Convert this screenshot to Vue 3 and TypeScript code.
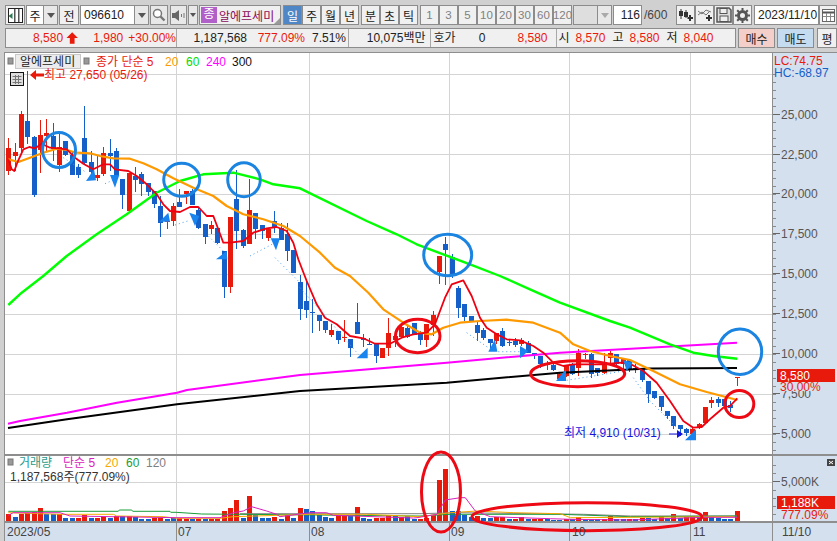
<script setup lang="ts">
type C = [string, number, number, number, number]
type Pt = [number, number]

const z3: C[] = [
  ['r',140,210,110,222],['r',153,165,125,210],['r',40,140,30,160],['b',60,108,-90,130],['b',108,282,105,288],
  ['r',102,147,57,215],['r',97,105,55,150],['b',105,145,65,180],['r',138,192,90,212],['b',120,162,120,165],
  ['b',163,222,150,222],['b',198,222,190,230],['b',111,185,15,190],['b',183,212,150,225],['r',222,232,165,240],
  ['r',156,218,138,225],['b',156,165,115,210],['b',150,225,142,240],['b',234,282,234,325],['r',215,330,215,330],
  ['b',225,236,198,272],['b',220,248,212,285],['b',246,272,246,285],['b',270,308,270,320],['b',315,365,285,407],
  ['r',360,362,340,385],['r',315,360,305,375],['b',303,318,265,318],['r',270,280,270,310],['b',270,312,265,312],
  ['b',327,382,320,385],['b',370,407,370,430],['r',372,385,360,400],['b',380,427,375,430],['b',450,558,450,590],
  ['r',348,558,348,575],['b',295,390,208,445],['b',387,435,385,440],['r',327,430,235,430],['b',336,385,336,415],
  ['b',372,390,372,415],['r',385,412,380,420],['b',360,377,330,395],['b',380,417,365,417],['b',400,450,365,480],
  ['b',447,515,447,515],
]
const z4: C[] = [
  ['b',183,263,163,297],['b',240,266,175,292],['b',273,276,235,335],['b',282,300,282,330],['b',300,327,300,335],
  ['r',327,343,310,348],['b',330,357,330,368],['r',349,352,297,362],['b',354,381,354,407],['b',303,338,245,338],
  ['b',352,358,340,378],['b',369,371,350,372],['b',370,405,365,425],['r',381,411,381,411],['r',336,381,291,405],
  ['r',345,358,345,378],['r',318,348,305,350],['b',321,348,315,350],['b',307,341,307,342],['b',340,357,330,372],
  ['r',309,357,309,378],['r',282,312,270,345],['r',105,153,105,188],['b',69,87,48,192],['b',108,159,100,172],
  ['b',201,260,195,292],['b',249,288,249,300],['b',285,303,285,303],['b',312,336,300,360],['b',327,351,320,358],
  ['b',354,366,354,390],['r',336,360,336,370],['b',330,375,320,378],['b',363,366,355,375],['b',360,372,351,377],
  ['r',358,370,352,374],['b',366,396,360,396],['b',396,402,396,415],['b',405,430,405,440],['r',425,432,420,448],
  ['b',432,447,425,450],
]
const z5: C[] = [
  ['r',160,175,155,180],['r',133,165,133,168],['b',133,160,125,162],['r',96,140,85,165],['r',100,103,95,115],
  ['b',100,160,95,172],['b',140,156,140,165],['r',130,155,95,160],['r',95,112,90,135],['b',100,130,100,135],
  ['r',115,130,110,145],['b',118,145,115,152],['b',142,146,130,155],['b',145,178,145,182],['b',180,218,180,245],
  ['b',210,230,210,235],['b',225,258,225,270],['b',270,285,270,295],['b',285,315,285,325],['b',312,325,312,345],
  ['b',325,335,320,345],['r',325,340,322,345],['r',310,322,305,325],['r',258,305,258,308],['r',238,247,228,262],
  ['b',233,245,228,258],['b',235,255,235,262],['b',252,262,240,272],['r',167,170,167,195],
]

const xOf = (i: number) => 8.3 + 6.333 * i
const conv = (a: C[], base: number) =>
  a.map((c) => ({ up: c[0] === 'r', t: base + c[1] / 3, b: base + c[2] / 3, wt: base + c[3] / 3, wb: base + c[4] / 3 }))
const candles = [...conv(z3, 100), ...conv(z4, 220), ...conv(z5, 320)].map((c, i) => ({
  ...c,
  x: Math.round(xOf(i)),
  h: Math.max(1, c.b - c.t),
}))

const fz3 = (p: Pt[]) => p.map(([x, y]): Pt => [x / 3, 100 + y / 3])
const fz4 = (p: Pt[]) => p.map(([x, y]): Pt => [280 + x / 3, 220 + y / 3])
const fz5 = (p: Pt[]) => p.map(([x, y]): Pt => [530 + x / 3, 320 + y / 3])
const fz6 = (p: Pt[]) => p.map(([x, y]): Pt => [x / 3, 445 + y / 3])
const fz7 = (p: Pt[]) => p.map(([x, y]): Pt => [417 + x / 3, 445 + y / 3])
const s = (p: Pt[]) => p.map(([x, y]) => `${x.toFixed(1)},${y.toFixed(1)}`).join(' ')

const red = s([
  ...fz3([[25,175],[35,205],[43,210],[52,185],[70,145],[88,138],[105,142],[125,128],[150,140],[175,142],[200,145],[225,170],[250,188],[280,205],[310,190],[330,190],[345,205],[385,210],[410,225],[440,250],[470,280],[490,310],[510,330],[540,333],[570,318],[595,318],[620,345],[640,345],[655,385],[670,425],[690,425],[730,420],[760,395],[800,382],[830,378],[860,390],[880,425]]),
  ...fz4([[55,115],[80,180],[110,250],[135,290],[170,310],[210,345],[250,352],[285,368],[330,368],[365,350],[400,340],[440,335],[465,310],[495,230],[515,190],[550,178],[575,225],[600,290],[620,320],[650,340],[680,355],[720,358],[760,375],[790,395],[820,425]]),
  ...fz5([[100,135],[130,130],[180,130],[220,130],[270,125],[300,128],[340,150],[380,185],[420,240],[460,300],[490,320],[515,318],[545,290],[580,260],[600,255],[622,232]]),
])
const orange = s([
  ...fz3([[25,175],[55,183],[90,170],[130,155],[170,143],[200,147],[230,155],[270,157],[300,165],[340,172],[390,173],[430,187],[470,205],[520,232],[580,260],[640,285],[680,315],[730,340],[790,355],[850,375]]),
  ...fz4([[60,45],[120,95],[165,140],[210,165],[265,215],[310,265],[370,305],[420,335],[455,340],[490,320],[540,305],[600,300],[680,296],[760,305],[840,335]]),
  ...fz5([[130,70],[180,90],[240,105],[300,117],[370,150],[450,190],[530,213],[622,237]]),
])
const green = s([
  ...fz3([[25,612],[65,575],[130,525],[200,465],[290,400],[380,340],[470,275],[540,240],[610,220],[700,215],[780,235],[820,250],[900,262]]),
  ...fz4([[260,0],[350,40],[410,70],[490,100],[570,130],[660,165],[750,205],[840,245]]),
  ...fz5([[240,0],[300,20],[420,70],[490,95],[550,105],[622,113]]),
])
const magenta = s([[8,422.7],[20,420],[67,411.7],[117,401.7],[177,391.7],[187,389],[300,374],[446.7,361.7],[560,351.7],[737,341.7]])
const black = s([[8,427],[67,418.3],[177,403.3],[300,390],[446.7,381.7],[560,371.7],[650,367.5],[737,367]])

const vols: [string, number][] = [
  ['r',205],['b',213],['r',205],['r',200],['r',197],['r',186],['b',205],['b',203],['r',203],['b',216],['b',216],['r',216],['r',207],['b',215],['r',215],['r',213],['b',215],['r',210],['b',210],['r',210],['b',214],['b',220],['b',218],['r',216],['r',216],['b',218],['b',216],['r',217],['r',218],['b',220],['r',218],['b',220],['r',218],['r',218],['r',195],['r',186],['r',162],['b',216],['r',150],['b',208],['b',216],['b',216],['r',213],['b',219],['r',208],['b',216],['r',186],['b',189],['b',195],['b',208],['b',213],['b',215],['r',208],['r',210],['b',210],['r',183],['b',216],['b',219],['r',215],['r',216],['r',208],['b',210],['r',213],['b',210],['b',218],
  ['r',220],['r',215],['r',208],['r',102],['r',69],['b',195],['b',195],['b',206],['b',213],['r',210],['b',216],['b',216],['r',214],['r',214],['b',218],['r',218],['r',213],['b',218],['r',218],['r',218],['b',218],['b',222],['b',222],['r',220],['b',220],['r',213],['b',220],['b',218],['b',220],['r',218],['r',210],['b',218],['b',218],['r',218],['b',218],['r',216],['b',215],['b',218],['r',212],['b',215],['r',204],['b',217],['r',213],['r',210],['b',216],['r',198],['b',214],['b',216],['b',219],['b',219],['r',195],
]
const volBars = vols.map((v, i) => {
  const y = 445 + v[1] / 3
  return { up: v[0] === 'r', x: Math.round(xOf(i)), y, h: 520 - y }
})
const volGrey = s([...fz6([[720,203],[1260,203]]), ...fz7([[120,200],[500,205],[640,210],[960,210]])])
const volGreen = s([...fz6([[25,196],[355,196],[358,192],[395,192],[398,196],[510,196],[512,199],[528,199],[605,204],[720,205],[1260,210]]), ...fz7([[100,205],[430,205],[640,212],[960,210]])])
const volOrange = s([...fz6([[25,200],[180,205],[340,205],[350,210],[490,212],[530,217],[660,217],[700,212],[930,205],[1100,205],[1260,212]]), ...fz7([[100,200],[180,195],[290,200],[430,203],[460,215],[950,212]])])
const volPink = s([...fz6([[25,208],[40,200],[180,200],[210,210],[530,215],[660,215],[700,200],[730,195],[755,182],[800,195],[830,205],[840,212],[930,200],[980,200],[1000,208],[1240,216]]), ...fz7([[0,215],[60,205],[85,162],[130,155],[145,155],[175,195],[220,212],[400,218],[460,220],[640,222],[860,214],[960,214]])])

const wings = [
  ...[[258,240,288,238,282,205],[330,222,358,222,345,260],[478,362,510,362,505,335],[568,335,598,345,585,375],[648,475,682,475,680,450],[812,412,840,412,828,448]].map((w) =>
    s(fz3([[w[0],w[1]],[w[2],w[3]],[w[4],w[5]]]))),
  ...[[230,412,263,412,263,380],[625,392,652,392,645,355],[720,375,745,390,720,412]].map((w) =>
    s(fz4([[w[0],w[1]],[w[2],w[3]],[w[4],w[5]]]))),
  ...[[78,180,108,180,108,145],[280,118,308,125,290,150],[465,358,498,358,498,325]].map((w) =>
    s(fz5([[w[0],w[1]],[w[2],w[3]],[w[4],w[5]]]))),
]
const dots = [
  s(fz3([[190,170],[260,215]])), s(fz3([[315,248],[345,235]])), s(fz3([[525,372],[570,358]])),
  s(fz3([[625,405],[670,450]])), s(fz3([[750,465],[825,425]])), s(fz3([[825,470],[900,545]])),
  s(fz4([[60,200],[140,290],[235,400]])), s(fz4([[560,335],[625,380]])), s(fz4([[655,392],[720,392]])),
  s(fz5([[110,178],[190,165],[280,150]])), s(fz5([[310,170],[360,240],[440,320]])),
]

const blueRings = [[59,149,16.5,17.5],[181.7,178.7,18,16.5],[244,178.7,16.3,17],[447.7,254,24,20.7],[740,350.7,21.7,22.7]]
const redRings = [[417.7,335,22.3,16.7],[577.7,372.7,47,13],[739.3,403,14.5,13.5],[441,491,19.5,40],[587,515.7,115,14]]

const gridY = [73, 113, 153, 193, 233, 273, 313, 353, 393, 433]
const gridX = [176.5, 309.5, 449.5, 569.5, 690.5]
const priceLabels = [
  ['25,000', 113], ['22,500', 153], ['20,000', 192], ['17,500', 232], ['15,000', 272],
  ['12,500', 312], ['10,000', 352], ['7,500', 392], ['5,000', 432],
] as [string, number][]
const minorTicks = Array.from({ length: 48 }, (_, i) => 73 + i * 8)
const volTicks = [464, 472, 480.5, 489, 497, 505, 513]
const dateLabels = [['2023/05', 7], ['07', 178], ['08', 311], ['09', 451], ['10', 572], ['11', 693], ['11/10', 782]] as [string, number][]
const dateTicks = [176.5, 309.5, 449.5, 569.5, 690.5]
const periods = ['1', '3', '5', '10', '20', '30', '60', '120']
</script>

<template>
  <div class="screen">
    <div class="toolbar">
      <button class="btn icon w19">
        <svg width="15" height="15" viewBox="0 0 15 15"><rect x=".5" y=".5" width="14" height="14" fill="#fff" stroke="#222" /><rect x="6" y="1" width="1.500" height="13" fill="#555" /><rect x="10" y="1" width="1.500" height="13" fill="#555" /><path d="M.5 8l4-3v6z" fill="#2a7a50" /></svg>
      </button>
      <div class="combo w32"><span class="field">주</span><span class="drop"></span></div>
      <button class="btn w20">전</button>
      <div class="combo code">
        <span class="field left">096610</span><span class="drop"></span>
        <span class="search">
          <svg width="14" height="14" viewBox="0 0 14 14"><circle cx="5.500" cy="5.500" r="4" fill="#fff" stroke="#777" stroke-width="1.500" /><path d="M8.500 8.500l4 4" stroke="#777" stroke-width="2.400" /></svg>
        </span>
      </div>
      <div class="combo sound">
        <span class="field icon">
          <svg width="15" height="13" viewBox="0 0 15 13"><path d="M1 4h3l4-3v11l-4-3H1z" fill="#666" /><path d="M10 5h1v3h-1zM12.500 4h1v5h-1z" fill="#777" /></svg>
        </span><span class="drop small"></span>
      </div>
      <div class="stock"><span class="badge">종</span><span class="stock-name">알에프세미</span><i class="corner"></i></div>
      <div class="group ml2">
        <button class="btn seg on">일</button><button class="btn seg">주</button><button class="btn seg">월</button><button class="btn seg">년</button>
      </div>
      <div class="group">
        <button class="btn seg">분</button><button class="btn seg">초</button><button class="btn seg">틱</button>
      </div>
      <div class="group periods">
        <button v-for="p in periods" :key="p" class="btn seg muted">{{ p }}</button>
      </div>
      <div class="combo blank"><span class="field grey"></span><span class="drop muted-drop"></span></div>
      <span class="count">116</span><span class="total">/600</span>
      <div class="group tools">
        <button class="btn tool"><svg width="16" height="14" viewBox="0 0 16 14"><path d="M3 1v10M8 2v8" stroke="#333" /><rect x="1" y="3" width="4" height="5" fill="#333" /><rect x="6" y="4" width="4" height="5" fill="#333" /><path d="M12 7v6M9.500 10h5.500" stroke="#333" stroke-width="2" /></svg></button>
        <button class="btn tool"><svg width="16" height="14" viewBox="0 0 16 14"><path d="M1 3l4 3 4-4 5 2M1 7l4-3 4 3 4-4" stroke="#777" fill="none" /><path d="M12 7v6M9 10h6" stroke="#333" stroke-width="2" /></svg></button>
        <button class="btn tool"><svg width="16" height="16" viewBox="0 0 16 16"><path d="M1 1h12l2 2v12H1z" fill="#ddd" stroke="#555" stroke-width="1.500" /><rect x="4" y="1.500" width="7" height="5" fill="#eee" stroke="#555" /><rect x="4" y="9" width="8" height="5.500" fill="#eee" stroke="#555" /></svg></button>
        <button class="btn tool"><svg width="15" height="15" viewBox="0 0 15 15"><circle cx="7.500" cy="7.500" r="4" fill="none" stroke="#555" stroke-width="3" /><path d="M7.500 0v15M0 7.500h15M2.200 2.200l10.600 10.600M12.800 2.200L2.200 12.800" stroke="#555" stroke-width="2" stroke-dasharray="2.500 10 2.500" /></svg></button>
      </div>
      <span class="date">2023/11/10</span>
      <button class="btn cal"><svg width="13" height="13" viewBox="0 0 13 13"><rect x=".5" y=".5" width="12" height="12" fill="#fff" stroke="#666" /><path d="M.5 3.500h12" stroke="#555" stroke-width="2" /><path d="M4.500 4v8M8.500 4v8M1 7.500h11" stroke="#888" /></svg></button>
    </div>

    <div class="quote-row">
      <div class="quote">
        <div class="cell c1 up">
          <span class="v1">8,580</span>
          <svg class="arrow" width="13" height="12" viewBox="0 0 13 12"><path d="M6.500 0l6 6H9v6H4V6H.5z" fill="#e81a0c" /></svg>
          <span class="v2">1,980</span><span class="v3">+30.00%</span>
        </div>
        <div class="cell c2">
          <span class="v4">1,187,568</span><span class="v5 up">777.09%</span><span class="v6">7.51%</span>
        </div>
        <div class="cell c3"><span class="v7">10,075백만</span></div>
        <div class="cell c4">
          <span class="v8">호가</span><span class="v9">0</span><span class="v10 up">8,580</span>
        </div>
        <div class="cell c5">
          <span class="k">시</span><span class="n up">8,570</span><span class="k">고</span><span class="n up">8,580</span><span class="k">저</span><span class="n up">8,040</span>
        </div>
      </div>
      <button class="trade buy">매수</button>
      <button class="trade sell">매도</button>
      <button class="trade more">평</button>
    </div>

    <div class="chart">
      <svg class="canvas" width="837" height="491" viewBox="0 50 837 491">
        <rect x="0" y="50" width="837" height="491" fill="#d0d0d0" />
        <rect x="4" y="51" width="833" height="490" fill="#8e8e8e" />
        <rect x="5" y="52" width="767" height="469" fill="#fff" />
        <rect x="773" y="52" width="64" height="488" fill="#d5e0ef" />
        <rect x="5" y="522" width="767" height="18" fill="#d5e0ef" />

        <g shape-rendering="crispEdges">
          <line v-for="y in gridY" :key="'gy' + y" x1="5" x2="772" :y1="y + 0.5" :y2="y + 0.5" stroke="#d4d4d4" />
          <line v-for="x in gridX" :key="'gx' + x" :x1="x" :x2="x" y1="52" y2="521" stroke="#d4d4d4" />
          <line x1="5" x2="772" y1="481.500" y2="481.500" stroke="#d4d4d4" />
          <line x1="5" x2="837" y1="454" y2="454" stroke="#8e8e8e" stroke-width="1.500" />
          <line x1="5" x2="837" y1="521" y2="521" stroke="#8e8e8e" stroke-width="1.500" />
          <line x1="772.500" x2="772.500" y1="52" y2="541" stroke="#8e8e8e" />
          <line v-for="x in dateTicks" :key="'dt' + x" :x1="x" :x2="x" y1="521" y2="540" stroke="#8e8e8e" />
          <line v-for="y in minorTicks" :key="'mt' + y" x1="773" x2="776" :y1="y + 0.5" :y2="y + 0.5" stroke="#8a8a8a" />
          <line v-for="l in priceLabels" :key="'pt' + l[0]" x1="773" x2="780" :y1="l[1] + 0.5" :y2="l[1] + 0.5" stroke="#666" />
          <line v-for="y in volTicks" :key="'vt' + y" x1="773" x2="776" :y1="y" :y2="y" stroke="#8a8a8a" />
          <line x1="773" x2="780" y1="480.500" y2="480.500" stroke="#666" />
        </g>

        <g shape-rendering="crispEdges">
          <g v-for="(c, i) in candles" :key="'c' + i" :fill="c.up ? '#e81a0c' : '#1560c8'">
            <rect :x="c.x" :y="c.wt" width="1" :height="c.wb - c.wt" />
            <rect :x="c.x - 2" :y="c.t" width="5" :height="c.h" />
          </g>
        </g>

        <polyline :points="magenta" class="ln" stroke="#ff00ff" stroke-width="2" />
        <polyline :points="black" class="ln" stroke="#000" stroke-width="2" />
        <polyline :points="green" class="ln" stroke="#00ff00" stroke-width="2.400" />
        <polyline :points="orange" class="ln" stroke="#ff9900" stroke-width="2.200" />
        <polyline :points="red" class="ln" stroke="#ee0011" stroke-width="1.800" />

        <polyline v-for="(d, i) in dots" :key="'d' + i" :points="d" class="ln" stroke="#4a9df0" stroke-width="1" stroke-dasharray="1 3" />
        <polygon v-for="(w, i) in wings" :key="'w' + i" :points="w" fill="#1a84ee" />

        <g shape-rendering="crispEdges">
          <rect v-for="(v, i) in volBars" :key="'v' + i" :x="v.x - 2" :y="v.y" width="5" :height="v.h" :fill="v.up ? '#e81a0c' : '#1560c8'" />
        </g>
        <polyline :points="volGrey" class="ln" stroke="#808080" stroke-width="1" />
        <polyline :points="volGreen" class="ln" stroke="#1a9c3a" stroke-width="1" />
        <polyline :points="volOrange" class="ln" stroke="#f5a800" stroke-width="1" />
        <polyline :points="volPink" class="ln" stroke="#d922bc" stroke-width="1" />

        <ellipse v-for="(r, i) in blueRings" :key="'br' + i" :cx="r[0]" :cy="r[1]" :rx="r[2]" :ry="r[3]" class="ln" stroke="#1a84e0" stroke-width="3" />
        <ellipse v-for="(r, i) in redRings" :key="'rr' + i" :cx="r[0]" :cy="r[1]" :rx="r[2]" :ry="r[3]" class="ln" stroke="#ee0a14" stroke-width="3" />

        <rect x="8" y="57" width="5" height="6" fill="#999" stroke="#777" />
        <rect x="15.500" y="53.500" width="65" height="14" fill="#ececec" stroke="#c8c8c8" />
        <text x="20" y="65" class="t" fill="#222">알에프세미</text>
        <rect x="84" y="57" width="5" height="6" fill="#999" stroke="#777" />
        <text x="96" y="65" class="t" fill="#e81a0c">종가 단순 5</text>
        <text x="165" y="65" class="t" fill="#ff9900">20</text>
        <text x="186" y="65" class="t" fill="#00dd00">60</text>
        <text x="206" y="65" class="t" fill="#ff00ff">240</text>
        <text x="232" y="65" class="t" fill="#111">300</text>

        <g>
          <rect x="10.500" y="71.500" width="13" height="13" fill="#ddd" stroke="#111" />
          <path d="M12.500 75.500h9M12.500 78.500h9M12.500 81.500h9M15.500 74v9M18.500 74v9" stroke="#777" />
        </g>
        <path d="M30 74l6-5v3.500h8v3h-8v3.500z" fill="#e81a0c" />
        <text x="44" y="78" class="t" fill="#e81a0c">최고 27,650 (05/26)</text>

        <text x="564" y="436" class="t" fill="#1414e0">최저 4,910 (10/31)</text>
        <path d="M669 432.500h8v-3.500l6 4-6 4v-3.500h-8z" fill="#1414e0" />

        <text x="774" y="64" class="t" fill="#e81a0c">LC:74.75</text>
        <text x="774" y="76" class="t" fill="#1560c8">HC:-68.97</text>

        <text v-for="l in priceLabels" :key="'pl' + l[0]" x="781" :y="l[1] + 5" class="t" fill="#555">{{ l[0] }}</text>
        <rect x="777" y="368" width="58" height="13" fill="#e81a0c" />
        <text x="780" y="379" class="t" fill="#fff">8,580</text>
        <rect x="779" y="381" width="50" height="9" fill="#d5e0ef" />
        <text x="780" y="390" class="t" fill="#e81a0c">30.00%</text>

        <rect x="8" y="458" width="5" height="6" fill="#999" stroke="#777" />
        <text x="19" y="466" class="t" fill="#2a9a8a">거래량</text>
        <text x="63" y="466" class="t" fill="#d922bc">단순 5</text>
        <text x="105" y="466" class="t" fill="#f5a800">20</text>
        <text x="126" y="466" class="t" fill="#1a9c3a">60</text>
        <text x="146" y="466" class="t" fill="#808080">120</text>
        <text x="10" y="480" class="t" fill="#333">1,187,568주(777.09%)</text>

        <rect x="827" y="458" width="8" height="7" fill="#444" />
        <path d="M829 460l4 3M833 460l-4 3" stroke="#fff" />
        <text x="781" y="485" class="t" fill="#555">5,000K</text>
        <rect x="777" y="495" width="58" height="13" fill="#e81a0c" />
        <text x="781" y="506" class="t" fill="#fff">1,188K</text>
        <text x="781" y="518" class="t" fill="#e81a0c">777.09%</text>

        <text v-for="d in dateLabels" :key="'dl' + d[0]" :x="d[1]" y="535" class="t" fill="#444">{{ d[0] }}</text>
      </svg>
    </div>
  </div>
</template>

<style scoped>
.screen {
  width: 837px;
  height: 541px;
  overflow: hidden;
  display: flex;
  flex-direction: column;
  background: #d0d0d0;
  font: 12px "Liberation Sans", "Noto Sans CJK KR", sans-serif;
  color: #222;
}
.toolbar {
  display: flex;
  align-items: stretch;
  height: 20px;
  margin-top: 5px;
  padding-left: 5px;
}
.btn {
  display: flex;
  align-items: center;
  justify-content: center;
  box-sizing: border-box;
  padding: 0;
  font: inherit;
  color: #222;
  background: #f0f0f0;
  border: 1px solid #8c8c8c;
}
.w19 { width: 20px; margin-right: 1px; }
.w20 { width: 20px; margin-right: 1px; }
.combo { display: flex; box-sizing: border-box; }
.w32 { width: 32px; margin-right: 1px; }
.field {
  flex: 1;
  display: flex;
  align-items: center;
  justify-content: center;
  box-sizing: border-box;
  background: #fff;
  border: 1px solid #8c8c8c;
}
.field.left { justify-content: flex-start; padding-left: 3px; }
.field.icon { background: #e8e8e8; }
.field.grey { background: #dedede; }
.drop {
  position: relative;
  width: 14px;
  box-sizing: border-box;
  background: #e8e8e8;
  border: 1px solid #8c8c8c;
  border-left: 0;
}
.drop::after {
  content: "";
  position: absolute;
  left: 2.500px;
  top: 7px;
  border: 4px solid transparent;
  border-top: 5px solid #555;
  border-bottom: 0;
}
.drop.small { width: 10px; margin-left: 1px; border-left: 1px solid #8c8c8c; }
.drop.small::after { left: 1px; border-width: 3px; border-top-width: 4px; border-bottom: 0; }
.muted-drop::after { border-top-color: #aaa; }
.code { width: 88px; margin-right: 2px; }
.search {
  width: 18px;
  margin-left: 1px;
  display: flex;
  align-items: center;
  justify-content: center;
  background: #e8e8e8;
  border: 1px solid #8c8c8c;
  box-sizing: border-box;
}
.sound { width: 28px; margin-right: 1px; }
.stock {
  position: relative;
  width: 82px;
  display: flex;
  align-items: center;
  box-sizing: border-box;
  background: #f0f0f0;
  border: 1px solid #8c8c8c;
  padding-left: 1px;
}
.badge {
  width: 16px;
  height: 16px;
  line-height: 15px;
  text-align: center;
  background: #b060c8;
  color: #fff;
}
.stock-name { margin-left: 2px; color: #8a0a5a; white-space: nowrap; }
.corner {
  position: absolute;
  right: 0;
  bottom: 0;
  border-left: 6px solid transparent;
  border-bottom: 6px solid #999;
}
.group { display: flex; margin-right: 1px; }
.ml2 { margin-left: 2px; margin-right: 2px; }
.seg { width: 19px; }
.seg.on { background: #4f86c6; color: #fff; }
.muted { color: #808080; font-size: 11.500px; }
.periods { margin-left: 1px; }
.blank { width: 39px; margin-right: 1px; }
.count {
  width: 29px;
  box-sizing: border-box;
  padding-right: 1px;
  line-height: 18px;
  text-align: right;
  background: #fff;
  border: 1px solid #8c8c8c;
}
.total { width: 34px; line-height: 20px; padding-left: 2px; box-sizing: border-box; color: #444; }
.tools { margin-left: 0; margin-right: 2px; }
.tool { width: 19px; }
.date {
  width: 65px;
  box-sizing: border-box;
  line-height: 18px;
  padding-left: 3px;
  background: #fff;
  border: 1px solid #8c8c8c;
  white-space: nowrap;
}
.cal { width: 18px; }
.quote-row {
  display: flex;
  height: 20px;
  margin-top: 3px;
  padding-left: 5px;
  margin-bottom: 3px;
}
.quote {
  width: 732px;
  display: flex;
  box-sizing: border-box;
  background: #f0f0f0;
  border: 1px solid #8c8c8c;
  line-height: 18px;
  white-space: nowrap;
}
.cell { display: flex; box-sizing: border-box; border-right: 1px solid #a8a8a8; }
.cell:last-child { border-right: 0; }
.up { color: #e81a0c; }
.c1 { width: 171px; }
.c2 { width: 171.500px; }
.c3 { width: 82px; }
.c4 { width: 126px; }
.c5 { flex: 1; }
.v1 { width: 60px; text-align: right; }
.arrow { margin: 3px 0 0 3px; }
.v2 { width: 47px; text-align: right; }
.v3 { margin-left: 5px; }
.v4 { width: 70px; text-align: right; }
.v5 { width: 58px; text-align: right; }
.v6 { width: 41px; text-align: right; }
.v7 { width: 77px; text-align: right; }
.v8 { margin-left: 3px; width: 24px; }
.v9 { width: 28px; text-align: right; }
.v10 { width: 62px; text-align: right; }
.k { width: 13px; margin-left: 2px; }
.n { width: 34px; text-align: right; margin-right: 5px; }
.trade {
  width: 37px;
  padding: 0;
  margin-left: 2px;
  font: inherit;
  color: #222;
  border: 1px solid #8c8c8c;
  background: #f4cfc9;
}
.sell { background: #c5dcf0; }
.more { width: 20px; margin-left: 3px; background: #f0f0f0; }
.chart { flex: 1; min-height: 0; }
.canvas { display: block; }
.ln { fill: none; stroke-linejoin: round; }
.t { font: 12px "Liberation Sans", "Noto Sans CJK KR", sans-serif; }
</style>
